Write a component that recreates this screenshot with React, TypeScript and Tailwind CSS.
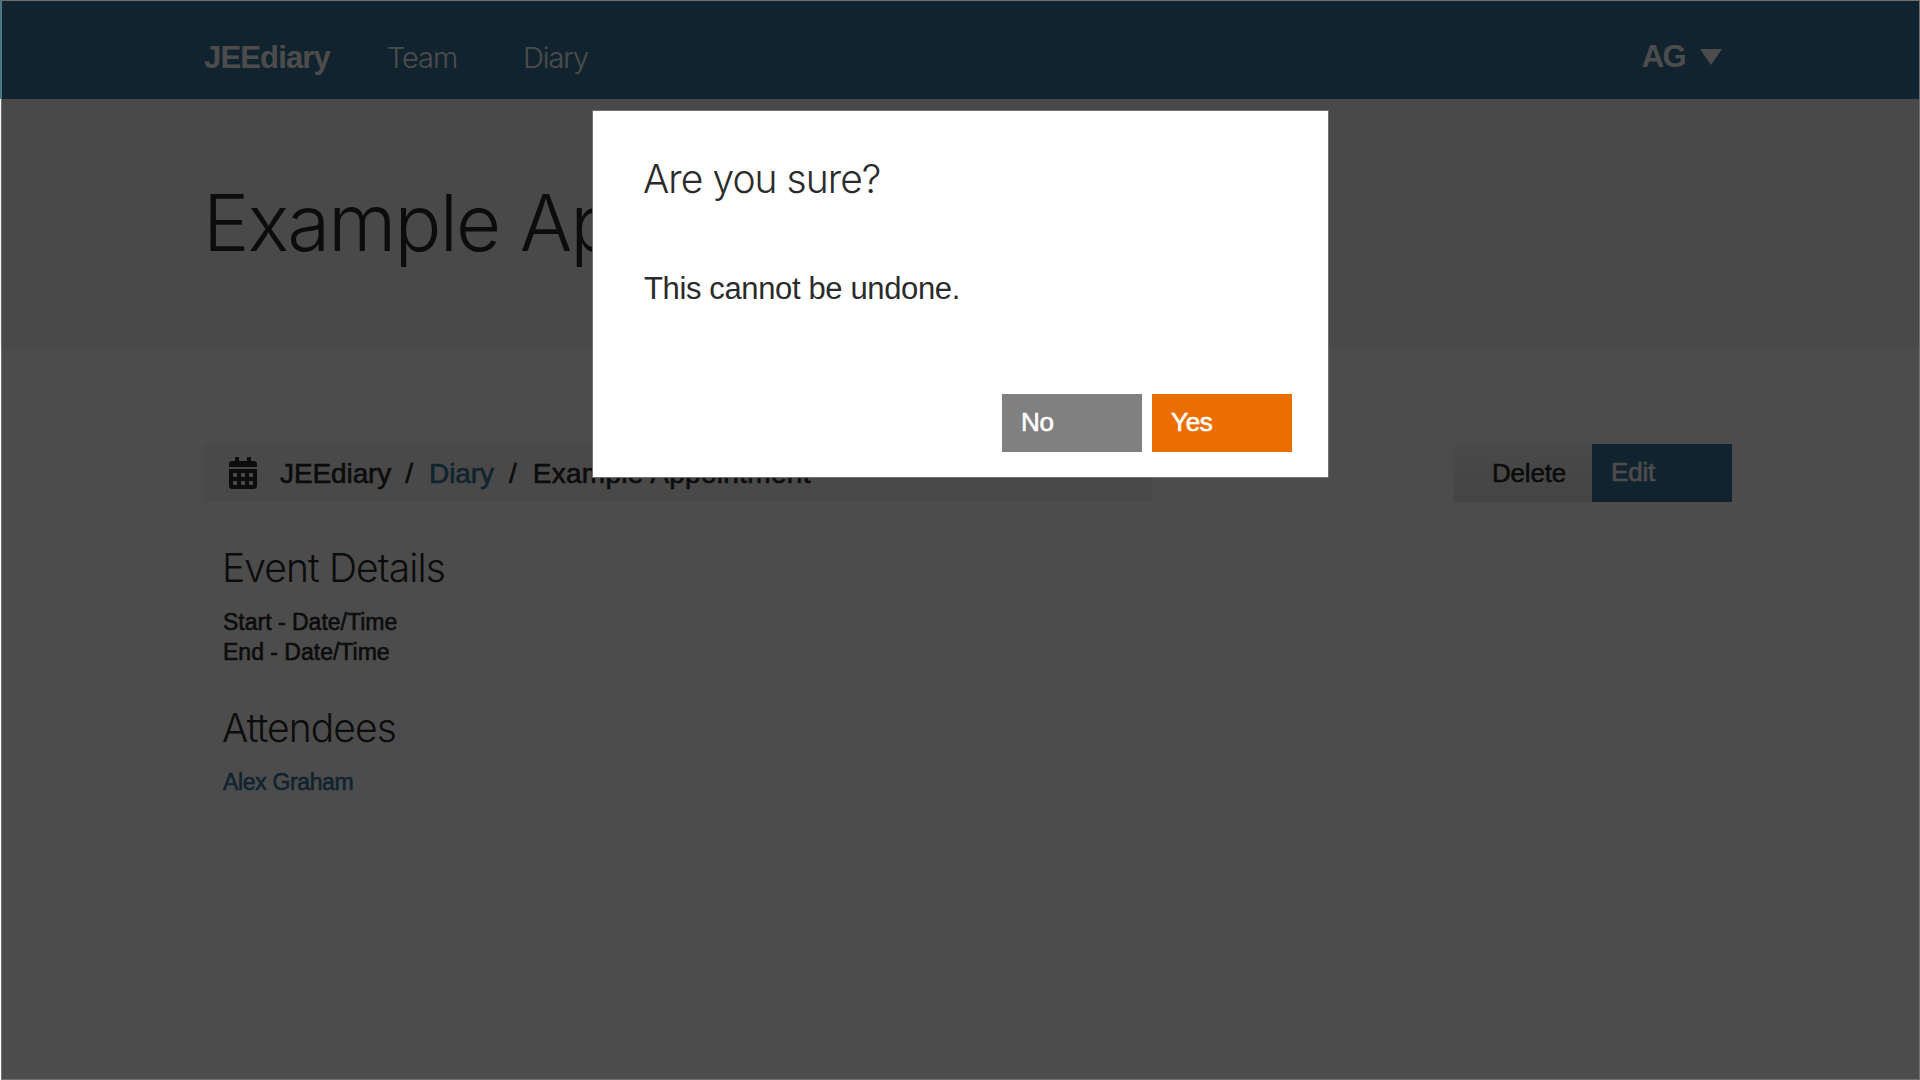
import { FaCalendarAlt } from "react-icons/fa";

const medium = "[-webkit-text-stroke:0.6px_currentColor]";
const light = "font-['Inter'] font-light [font-feature-settings:'calt'_0,'liga'_0]";

function Header() {
  return (
    <header className="flex h-[99px] items-start bg-[#38779c] pl-[204px] pr-[198px] text-white">
      <span className="mt-10 w-[126px] text-[31px] leading-[36px] font-bold tracking-[-0.85px]">JEEdiary</span>
      <nav className="mt-10 flex">
        <a className={`${light} ml-[57px] w-[136px] text-[29px] leading-[36px] tracking-[-1.1px]`}>Team</a>
        <a className={`${light} text-[29px] leading-[36px] tracking-[-1.1px]`}>Diary</a>
      </nav>
      <div className="mt-[38px] ml-auto flex">
        <span className="pt-px text-[31px] leading-[36px] font-bold tracking-[-1.6px]">AG</span>
        <svg className="mt-[11px] ml-[15px] h-4 w-[22px]" viewBox="0 0 22 16" fill="currentColor">
          <path d="M0 0h22L11 16z" />
        </svg>
      </div>
    </header>
  );
}

function Toolbar() {
  return (
    <div className="flex h-[58px] justify-between">
      <div className={`flex w-[948px] items-center bg-[#f3f3f3] pl-[25px] text-[28px] ${medium}`}>
        <FaCalendarAlt className="h-8 w-7 stroke-none" />
        <div className="flex pt-0.5">
          <span className="ml-[23px] tracking-[-0.1px]">JEEdiary</span>
          <span className="ml-[14px]">/</span>
          <a className="ml-4 tracking-[-0.1px] text-[#38779c]">Diary</a>
          <span className="ml-[15px]">/</span>
          <span className="ml-4 tracking-[0.3px]">Example Appointment</span>
        </div>
      </div>
      <div className={`flex text-[26px] leading-[58px] tracking-[-0.2px] ${medium}`}>
        <button className="w-[138px] bg-linear-to-b from-[#f5f5f5] to-[#e4e4e4] pl-[38px] text-left">Delete</button>
        <button className="w-[140px] bg-[#38779c] pb-0.5 pl-[19px] text-left leading-[56px] text-white">Edit</button>
      </div>
    </div>
  );
}

function Details() {
  return (
    <section className="mt-[42px] pl-[19px]">
      <h2 className={`${light} -ml-px text-[39px] leading-[48px] tracking-[-0.9px]`}>Event Details</h2>
      <div className={`mt-[15px] text-[23px] leading-[30px] ${medium}`}>
        <p>Start - Date/Time</p>
        <p>End - Date/Time</p>
      </div>
      <h2 className={`${light} mt-[37px] -ml-px text-[39px] leading-[48px] tracking-[-0.9px]`}>Attendees</h2>
      <p className={`mt-[15px] text-[23px] leading-[30px] tracking-[-0.35px] text-[#38779c] ${medium}`}>Alex Graham</p>
    </section>
  );
}

function ConfirmDialog() {
  return (
    <div role="dialog" className="absolute top-[110px] left-[592px] flex h-[368px] w-[737px] flex-col border border-[#707070] bg-white pt-[44px] pl-[51px]">
      <h2 className={`${light} -ml-px text-[39px] leading-[48px] tracking-[-0.95px]`}>Are you sure?</h2>
      <p className="mt-[68px] text-[31px] leading-[36px] tracking-[-0.37px]">This cannot be undone.</p>
      <div className={`mt-auto mr-[36px] mb-[25px] flex justify-end gap-[10px] text-[26px] leading-[56px] tracking-[-0.3px] text-white ${medium}`}>
        <button className="h-[58px] w-[140px] bg-[#808080] pb-0.5 pl-[19px] text-left">No</button>
        <button className="h-[58px] w-[140px] bg-[#eb6f00] pb-0.5 pl-[19px] text-left">Yes</button>
      </div>
    </div>
  );
}

export default function App() {
  return (
    <div className="relative h-[1080px] w-[1920px] overflow-hidden bg-white font-['Liberation_Sans',sans-serif] text-[#2b2b2b]">
      <Header />
      <div className="h-[250px] bg-[#f3f3f3] pt-[74px] pl-[203px]">
        <h1 className={`${light} text-[78px] leading-[100px] tracking-[-1.8px]`}>Example Appointment</h1>
      </div>
      <main className="pt-[95px] pr-[188px] pl-[204px]">
        <Toolbar />
        <Details />
      </main>
      <div className="absolute inset-y-0 right-0 left-px border border-[#707070] bg-black/70" />
      <ConfirmDialog />
    </div>
  );
}
